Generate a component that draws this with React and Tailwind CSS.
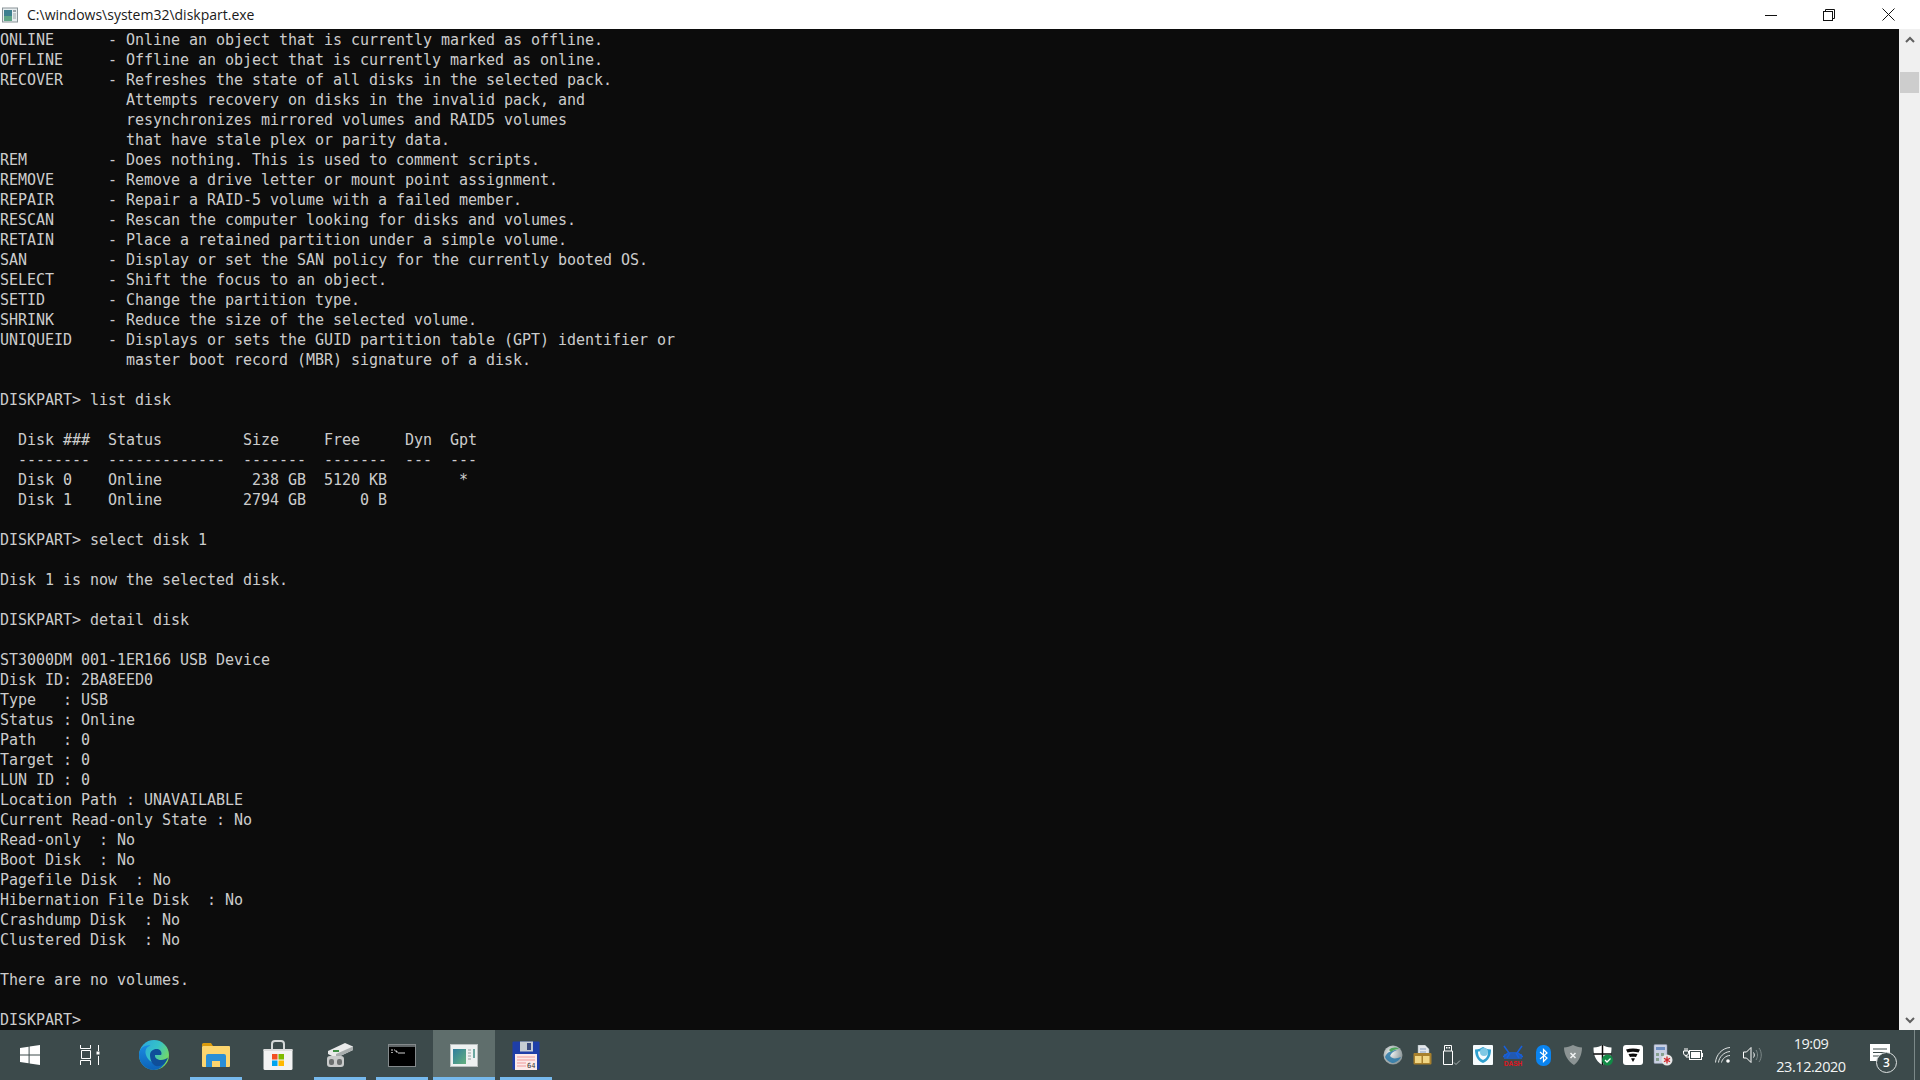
const termLines = [
  "ONLINE      - Online an object that is currently marked as offline.",
  "OFFLINE     - Offline an object that is currently marked as online.",
  "RECOVER     - Refreshes the state of all disks in the selected pack.",
  "              Attempts recovery on disks in the invalid pack, and",
  "              resynchronizes mirrored volumes and RAID5 volumes",
  "              that have stale plex or parity data.",
  "REM         - Does nothing. This is used to comment scripts.",
  "REMOVE      - Remove a drive letter or mount point assignment.",
  "REPAIR      - Repair a RAID-5 volume with a failed member.",
  "RESCAN      - Rescan the computer looking for disks and volumes.",
  "RETAIN      - Place a retained partition under a simple volume.",
  "SAN         - Display or set the SAN policy for the currently booted OS.",
  "SELECT      - Shift the focus to an object.",
  "SETID       - Change the partition type.",
  "SHRINK      - Reduce the size of the selected volume.",
  "UNIQUEID    - Displays or sets the GUID partition table (GPT) identifier or",
  "              master boot record (MBR) signature of a disk.",
  "",
  "DISKPART> list disk",
  "",
  "  Disk ###  Status         Size     Free     Dyn  Gpt",
  "  --------  -------------  -------  -------  ---  ---",
  "  Disk 0    Online          238 GB  5120 KB        *",
  "  Disk 1    Online         2794 GB      0 B",
  "",
  "DISKPART> select disk 1",
  "",
  "Disk 1 is now the selected disk.",
  "",
  "DISKPART> detail disk",
  "",
  "ST3000DM 001-1ER166 USB Device",
  "Disk ID: 2BA8EED0",
  "Type   : USB",
  "Status : Online",
  "Path   : 0",
  "Target : 0",
  "LUN ID : 0",
  "Location Path : UNAVAILABLE",
  "Current Read-only State : No",
  "Read-only  : No",
  "Boot Disk  : No",
  "Pagefile Disk  : No",
  "Hibernation File Disk  : No",
  "Crashdump Disk  : No",
  "Clustered Disk  : No",
  "",
  "There are no volumes.",
  "",
  "DISKPART> ",
];

function ConsoleIcon() {
  return (
    <svg width="16" height="16" viewBox="0 0 16 16">
      <rect x="0.5" y="1" width="15" height="14" fill="#e8eef0" stroke="#8a9498" />
      <rect x="2" y="3" width="8" height="11" fill="#3d7f8f" />
      <rect x="2" y="9" width="8" height="5" fill="#5ea486" />
      <rect x="11" y="3" width="3" height="2" fill="#9aa4a8" />
      <rect x="11" y="6" width="3" height="6" fill="#c2cacc" />
    </svg>
  );
}

function TitleBar() {
  return (
    <div className="h-[29px] bg-white flex items-center shrink-0">
      <div className="ml-[2px] w-[16px] flex"><ConsoleIcon /></div>
      <span className="ml-[9px] font-['Open_Sans',sans-serif] text-[14px] text-[#1a1a1a]">C:\windows\system32\diskpart.exe</span>
      <div className="ml-auto flex h-full mr-[2px]">
        <div className="w-[58px] flex items-center justify-center">
          <svg width="12" height="12" viewBox="0 0 12 12"><path d="M0 6.5h12" stroke="#111" /></svg>
        </div>
        <div className="w-[58px] flex items-center justify-center">
          <svg width="12" height="12" viewBox="0 0 12 12" fill="none" stroke="#111"><rect x="0.5" y="2.5" width="9" height="9" /><path d="M2.5 2.5v-2h9v9h-2" /></svg>
        </div>
        <div className="w-[60px] flex items-center justify-center">
          <svg width="13" height="13" viewBox="0 0 13 13" stroke="#111"><path d="M0.5 0.5l12 12M12.5 0.5l-12 12" /></svg>
        </div>
      </div>
    </div>
  );
}

function Scrollbar() {
  return (
    <div className="w-[21px] bg-[#f0f0f0] flex flex-col shrink-0 items-center">
      <div className="h-[21px] flex items-center justify-center">
        <svg width="10" height="8" viewBox="0 0 10 8" fill="none" stroke="#606060" strokeWidth="2"><path d="M1 6l4-4 4 4" /></svg>
      </div>
      <div className="mt-[22px] h-[21px] w-[19px] bg-[#cdcdcd]" />
      <div className="flex-1" />
      <div className="h-[21px] flex items-center justify-center">
        <svg width="10" height="8" viewBox="0 0 10 8" fill="none" stroke="#606060" strokeWidth="2"><path d="M1 2l4 4 4-4" /></svg>
      </div>
    </div>
  );
}

function WinLogo() {
  return (
    <svg width="20" height="20" viewBox="0 0 20 20" fill="#fff">
      <path d="M0 3l8.6-1.2v7.7H0zM9.6 1.6L20 0v9.5H9.6zM0 10.5h8.6v7.7L0 17zM9.6 10.5H20V20L9.6 18.4z" />
    </svg>
  );
}

function TaskView() {
  return (
    <svg width="20" height="20" viewBox="0 0 20 20" fill="none" stroke="#fff">
      <path d="M0.5 0v3.5h10V0M1.5 5.5h9v8h-9zM0.5 20v-4.5h10V20M18.5 0v6M18.5 11v9" />
      <rect x="16.5" y="6.5" width="3" height="3" fill="#fff" stroke="none" />
    </svg>
  );
}

function EdgeIcon() {
  return (
    <svg width="30" height="30" viewBox="0 0 30 30">
      <defs>
        <linearGradient id="edgeA" x1="0" y1="0" x2="1" y2="0.6">
          <stop offset="0" stopColor="#2aa4df" />
          <stop offset="0.55" stopColor="#35c1c8" />
          <stop offset="1" stopColor="#7bdc5b" />
        </linearGradient>
        <linearGradient id="edgeB" x1="0" y1="0" x2="0" y2="1">
          <stop offset="0" stopColor="#1a8be0" />
          <stop offset="1" stopColor="#0d62b8" />
        </linearGradient>
      </defs>
      <circle cx="15" cy="15" r="15" fill="url(#edgeA)" />
      <path d="M0 15C0 8 6 4.5 11.5 5.5 7 7 5.5 11 7 15c1.5 5 6 8 11 8 4 0 8-1.5 10-4-2 6.500-7.500 11-13 11C6.500 30 0 23 0 15z" fill="url(#edgeB)" />
      <path d="M11 15c0-3.500 3-6 6.500-6 3 0 5 2 5 4.500 0 1-.5 1.500-1.500 1.500h-5c-.5 2.500 2 5 6 5 3 0 5-1 7-2.500C27 24 21 27 17 26c-3.500-1-6-6-6-11z" fill="#0f4f99" />
    </svg>
  );
}

function ExplorerIcon() {
  return (
    <svg width="30" height="26" viewBox="0 0 30 26">
      <path d="M1 2.500A1.500 1.500 0 0 1 2.500 1H10l2 3H1z" fill="#d99a0c" />
      <rect x="1" y="4" width="28" height="21" rx="1" fill="#fcd56e" />
      <path d="M5 25V14a2 2 0 0 1 2-2h16a2 2 0 0 1 2 2v11h-6v-6h-8v6z" fill="#2a8fd6" />
      <rect x="11" y="19" width="8" height="4" fill="#fcd56e" />
    </svg>
  );
}

function StoreIcon() {
  return (
    <svg width="30" height="31" viewBox="0 0 30 31">
      <path d="M9 9V4a3 3 0 0 1 3-3h6a3 3 0 0 1 3 3v5" fill="none" stroke="#d5d8d8" strokeWidth="2" />
      <rect x="0.500" y="9" width="29" height="21" rx="1.500" fill="#f3f3f3" />
      <rect x="0.500" y="9" width="29" height="2" fill="#dcdcdc" />
      <rect x="9" y="14" width="5.500" height="5.500" fill="#f25022" />
      <rect x="15.500" y="14" width="5.500" height="5.500" fill="#7fba00" />
      <rect x="9" y="20.500" width="5.500" height="5.500" fill="#00a4ef" />
      <rect x="15.500" y="20.500" width="5.500" height="5.500" fill="#ffb900" />
    </svg>
  );
}

function DiskToolIcon() {
  return (
    <svg width="28" height="26" viewBox="0 0 28 26">
      <path d="M2 9L19 1l8 3.500v3.500L10 16l-8-4z" fill="#e9eaea" />
      <path d="M10 12L27 4.500v3.500L10 16z" fill="#a8adad" />
      <rect x="7" y="8" width="6" height="2" fill="#3f8f44" />
      <rect x="1" y="14" width="17" height="11" rx="3" fill="#c9cbcb" />
      <rect x="3" y="17" width="5" height="6" rx="2" fill="#6b6f6f" />
      <rect x="11" y="17" width="5" height="6" rx="2" fill="#6b6f6f" />
    </svg>
  );
}

function CmdIcon() {
  return (
    <svg width="28" height="23" viewBox="0 0 28 23">
      <rect x="0.500" y="0.500" width="27" height="22" fill="#000" stroke="#83898b" />
      <rect x="1" y="1" width="26" height="2" fill="#5e6466" />
      <path d="M3 6h2M6 6h1M7.500 6.500l2 2M10 9h7" stroke="#d0d0d0" strokeWidth="1.200" />
      <path d="M3 8.500h2" stroke="#a0a0a0" />
    </svg>
  );
}

function WindowIcon() {
  return (
    <svg width="28" height="23" viewBox="0 0 28 23">
      <rect x="0.500" y="0.500" width="27" height="22" fill="#eef1f1" stroke="#b9bfbf" />
      <defs>
        <linearGradient id="winPane" x1="0" y1="0" x2="1" y2="1">
          <stop offset="0" stopColor="#2f7d9e" />
          <stop offset="1" stopColor="#64b07e" />
        </linearGradient>
      </defs>
      <rect x="3" y="5" width="13" height="15" fill="url(#winPane)" />
      <path d="M18 6h3M18 9h3M18 12h3M18 15h3" stroke="#b2b9b9" strokeWidth="1.500" />
      <rect x="23" y="5" width="2" height="9" fill="#6aa6a0" />
    </svg>
  );
}

function SaveIcon() {
  return (
    <svg width="28" height="29" viewBox="0 0 28 29">
      <rect x="0.500" y="0.500" width="27" height="28" rx="1" fill="#1e3ea8" />
      <rect x="8" y="0.500" width="13" height="10" fill="#c6ccd4" />
      <rect x="15" y="2" width="4" height="7" fill="#3a4a80" />
      <rect x="3" y="13" width="22" height="16" fill="#fbe9e9" />
      <path d="M5 16h18M5 19h18M5 22h9M5 25h9" stroke="#ef9a9a" strokeWidth="1.200" />
      <text x="15" y="27" fontSize="7" fontFamily="'DejaVu Sans Mono',monospace" fill="#333">64</text>
    </svg>
  );
}

function GlobeIcon() {
  return (
    <svg width="20" height="20" viewBox="0 0 20 20">
      <defs>
        <radialGradient id="globe" cx="0.4" cy="0.4" r="0.7">
          <stop offset="0" stopColor="#f2f4f4" />
          <stop offset="1" stopColor="#7e8a8c" />
        </radialGradient>
      </defs>
      <circle cx="10" cy="10" r="9.500" fill="url(#globe)" />
      <path d="M2 12c2-5 7-7 12-7-3 1-6 3-7 6 2 3 6 3 11 1-2 4-6 6-9 6-3-1-6-3-7-6z" fill="#2b79a8" opacity="0.85" />
      <path d="M6 5c3-3 7-3 10-1-3 0-6 1-8 3z" fill="#4ea65c" />
    </svg>
  );
}

function FolderLockIcon() {
  return (
    <svg width="20" height="20" viewBox="0 0 20 20">
      <path d="M5 0h7l4 4v7H5z" fill="#e3e6ea" stroke="#9aa" strokeWidth="0.500" />
      <path d="M7 4h6M7 7h6" stroke="#8aa0bf" />
      <rect x="0.500" y="8" width="18" height="11.500" rx="1" fill="#a8802c" />
      <rect x="2" y="11" width="6.500" height="7" fill="#f1d684" />
      <rect x="10" y="11" width="6.500" height="7" fill="#f1d684" />
    </svg>
  );
}

function UsbIcon() {
  return (
    <svg width="20" height="20" viewBox="0 0 20 20" fill="none" stroke="#fff">
      <path d="M1.500 6V0.500h7V6M0.500 6h9v13.500h-9z" />
      <rect x="3" y="2" width="1.500" height="1.500" fill="#fff" stroke="none" />
      <rect x="5.500" y="2" width="1.500" height="1.500" fill="#fff" stroke="none" />
      <path d="M11 17.500l2 2 4-4" stroke="#a9b2b2" />
    </svg>
  );
}

function HpShieldIcon() {
  return (
    <svg width="20" height="20" viewBox="0 0 20 20">
      <rect width="20" height="20" rx="1" fill="#f6fbfd" />
      <path d="M2 4.500C6 4.500 8 3 10 2c2 1 4 2.500 8 2.500 0 6-2 11-8 13.500-6-2.500-8-7.500-8-13.500z" fill="#2fa0cf" />
      <path d="M5 6.500c2 0 3.500-.7 5-1.500 1.500.8 3 1.500 5 1.500 0 3.500-1 7-5 8.500-4-1.500-5-5-5-8.500z" fill="#f6fbfd" />
      <circle cx="11" cy="7" r="4" fill="#7fc8e4" />
    </svg>
  );
}

function DashIcon() {
  return (
    <svg width="20" height="21" viewBox="0 0 20 21">
      <path d="M1 1l5 7h8l5-7M0 12l5-4M20 12l-5-4M4 13l3-5M16 13l-3-5" fill="none" stroke="#1760dc" strokeWidth="1.500" />
      <rect x="1" y="9" width="18" height="5" fill="#1760dc" opacity="0.700" />
      <text x="10" y="20.500" textAnchor="middle" fontSize="6.500" fontWeight="700" fontFamily="'Liberation Sans',sans-serif" fill="#e1141d">DASH</text>
    </svg>
  );
}

function BluetoothIcon() {
  return (
    <div className="w-[15px] h-[21px] rounded-[7px] bg-[#0a84f0] flex items-center justify-center">
      <svg width="9" height="15" viewBox="0 0 9 15" fill="none" stroke="#fff" strokeWidth="1.200"><path d="M1 4l7 6-3.500 3.500v-12L8 5l-7 6" /></svg>
    </div>
  );
}

function GrayShieldIcon() {
  return (
    <svg width="18" height="20" viewBox="0 0 18 20">
      <path d="M9 0c3 1.500 6 2.500 9 2.500C18 10 15 16 10 20 4 16 0 10 0 2.500 3 2.500 6 1.500 9 0z" fill="#8c9494" />
      <path d="M6.500 8l5 5M11.500 8l-5 5" stroke="#eef0f0" strokeWidth="1.600" />
    </svg>
  );
}

function DefenderIcon() {
  return (
    <svg width="20" height="21" viewBox="0 0 20 21">
      <path d="M9.500 0c2.500 1.500 5 2.500 9 2.500 0 6-1 13-9 17.500-8-4.500-9-11.500-9-17.500 4 0 6.500-1 9-2.500z" fill="#fff" />
      <path d="M9.500 0v20M0.500 9h18" stroke="#0c0c0c" strokeWidth="1.500" />
      <circle cx="14.500" cy="15" r="5.500" fill="#128a46" />
      <path d="M12 15l2 2 3.500-3.500" fill="none" stroke="#fff" strokeWidth="1.300" />
    </svg>
  );
}

function FSecureIcon() {
  return (
    <svg width="20" height="20" viewBox="0 0 20 20">
      <rect width="20" height="20" rx="3" fill="#fff" />
      <path d="M3 4.500c4.500-1.500 9.500-1.500 14 0l-1.500 3c-3.500-1-7.500-1-11 0zM5.500 9c3-.7 6-.7 9 0L13 12c-2-.5-4-.5-6 0zM8 13.500c1.500-.3 2.500-.3 4 0l-2 3.500z" fill="#0a0a0a" />
    </svg>
  );
}

function AppIcon() {
  return (
    <svg width="20" height="22" viewBox="0 0 20 22">
      <rect x="1" y="0.500" width="13" height="19" rx="1" fill="#c9d0e2" stroke="#8a93a8" strokeWidth="0.500" />
      <rect x="3" y="3" width="9" height="3" fill="#6f90c4" />
      <path d="M3 9h3v3H3zM8 9h3v3H8zM3 14h3v3H3z" fill="#86a08e" />
      <circle cx="14" cy="16" r="5.500" fill="#e7e7e7" />
      <path d="M14 12.500v7M11 14.200l6 3.600M17 14.200l-6 3.600" stroke="#d0262c" strokeWidth="1.300" />
    </svg>
  );
}

function BatteryIcon() {
  return (
    <svg width="20" height="14" viewBox="0 0 20 14" fill="none" stroke="#fff">
      <path d="M2 0v3M4 0v3" />
      <path d="M0.500 3h5v2a2.500 2.500 0 0 1-5 0zM3 7v2h3" />
      <rect x="6.500" y="2.500" width="12" height="9" />
      <rect x="8" y="4" width="9" height="6" fill="#fff" stroke="none" />
      <rect x="18.500" y="5" width="1.500" height="4" fill="#fff" stroke="none" />
    </svg>
  );
}

function WifiIcon() {
  return (
    <svg width="16" height="16" viewBox="0 0 16 16" fill="none" strokeWidth="1">
      <path d="M0.500 15.500C1 8 7 1 15 0.500" stroke="#dfe3e3" />
      <path d="M3.500 15.500C4 10 9 5 15 4.500" stroke="#dfe3e3" />
      <path d="M6.500 15.500C7 12 11 8.500 15 8.500" stroke="#dfe3e3" />
      <circle cx="13" cy="14" r="1.800" fill="#fff" />
    </svg>
  );
}

function VolumeIcon() {
  return (
    <svg width="20" height="16" viewBox="0 0 20 16" fill="none" stroke="#fff">
      <path d="M0.500 5v6h3l4.500 4.500V0.500L3.500 5z" />
      <path d="M10.500 5.500c1 1.500 1 3.500 0 5" />
      <path d="M13 3c2 3 2 7 0 10M16 1c3 4 3 10 0 14" stroke="#7c8888" />
    </svg>
  );
}

function TaskItem({ underline, active, children }) {
  return (
    <div className={`relative w-[62px] h-full flex items-center justify-center ${active ? "bg-[#5f6e6c]" : ""}`}>
      {children}
      {underline && (
        <div className={`absolute bottom-0 h-[3px] bg-[#76b9ed] ${active ? "inset-x-0" : "inset-x-[5px]"}`} />
      )}
    </div>
  );
}

function TrayItem({ children }) {
  return <div className="w-[30px] h-full flex items-center justify-center">{children}</div>;
}

function Taskbar() {
  return (
    <div className="h-[50px] shrink-0 flex items-stretch bg-[#3c4a4b]">
      <div className="w-[60px] flex items-center justify-center"><WinLogo /></div>
      <div className="w-[63px] flex items-center justify-center pr-[3px]"><TaskView /></div>
      <TaskItem><EdgeIcon /></TaskItem>
      <TaskItem underline><ExplorerIcon /></TaskItem>
      <TaskItem><StoreIcon /></TaskItem>
      <TaskItem underline><DiskToolIcon /></TaskItem>
      <TaskItem underline><CmdIcon /></TaskItem>
      <TaskItem underline active><WindowIcon /></TaskItem>
      <TaskItem underline><SaveIcon /></TaskItem>

      <div className="ml-auto flex items-stretch">
        <TrayItem><GlobeIcon /></TrayItem>
        <TrayItem><FolderLockIcon /></TrayItem>
        <TrayItem><UsbIcon /></TrayItem>
        <TrayItem><HpShieldIcon /></TrayItem>
        <TrayItem><DashIcon /></TrayItem>
        <TrayItem><BluetoothIcon /></TrayItem>
        <TrayItem><GrayShieldIcon /></TrayItem>
        <TrayItem><DefenderIcon /></TrayItem>
        <TrayItem><FSecureIcon /></TrayItem>
        <TrayItem><AppIcon /></TrayItem>
        <TrayItem><BatteryIcon /></TrayItem>
        <TrayItem><WifiIcon /></TrayItem>
        <TrayItem><VolumeIcon /></TrayItem>
        <div className="w-[84px] ml-[1px] mr-[3px] flex flex-col items-center justify-center gap-[4px] font-['Open_Sans',sans-serif] text-[14.500px] leading-[19px] tracking-[-0.45px] text-[#f2f4f4]">
          <span>19:09</span>
          <span>23.12.2020</span>
        </div>
        <div className="relative w-[48px] mr-[10px] flex items-center justify-center">
          <svg width="20" height="19" viewBox="0 0 20 19" className="mb-[4px]">
            <path d="M0 0h20v17H12l-3 2v-2H0z" fill="#fff" />
            <path d="M3 5h14M3 8.500h14M3 12h10" stroke="#3c4a4b" strokeWidth="1" />
          </svg>
          <div className="absolute left-[20px] top-[22px] w-[21px] h-[21px] rounded-full border border-[#dfe3e3] bg-[#3c4a4b] flex items-center justify-center font-['Open_Sans',sans-serif] text-[12px] font-semibold text-white">3</div>
        </div>
        <div className="w-[6px] border-l border-[#7b8888]" />
      </div>
    </div>
  );
}

export default function App() {
  return (
    <div className="w-[1920px] h-[1080px] flex flex-col overflow-hidden bg-[#0c0c0c]">
      <TitleBar />
      <div className="flex-1 min-h-0 flex">
        <div className="flex-1 min-w-0 pt-[1px] bg-[#0c0c0c] text-[#cccccc] font-['DejaVu_Sans_Mono',monospace] text-[15px] leading-[20px] tracking-[-0.03px]">
          {termLines.map((line, i) => (
            <div key={i} className="h-[20px] whitespace-pre">{line}</div>
          ))}
        </div>
        <Scrollbar />
      </div>
      <Taskbar />
    </div>
  );
}
